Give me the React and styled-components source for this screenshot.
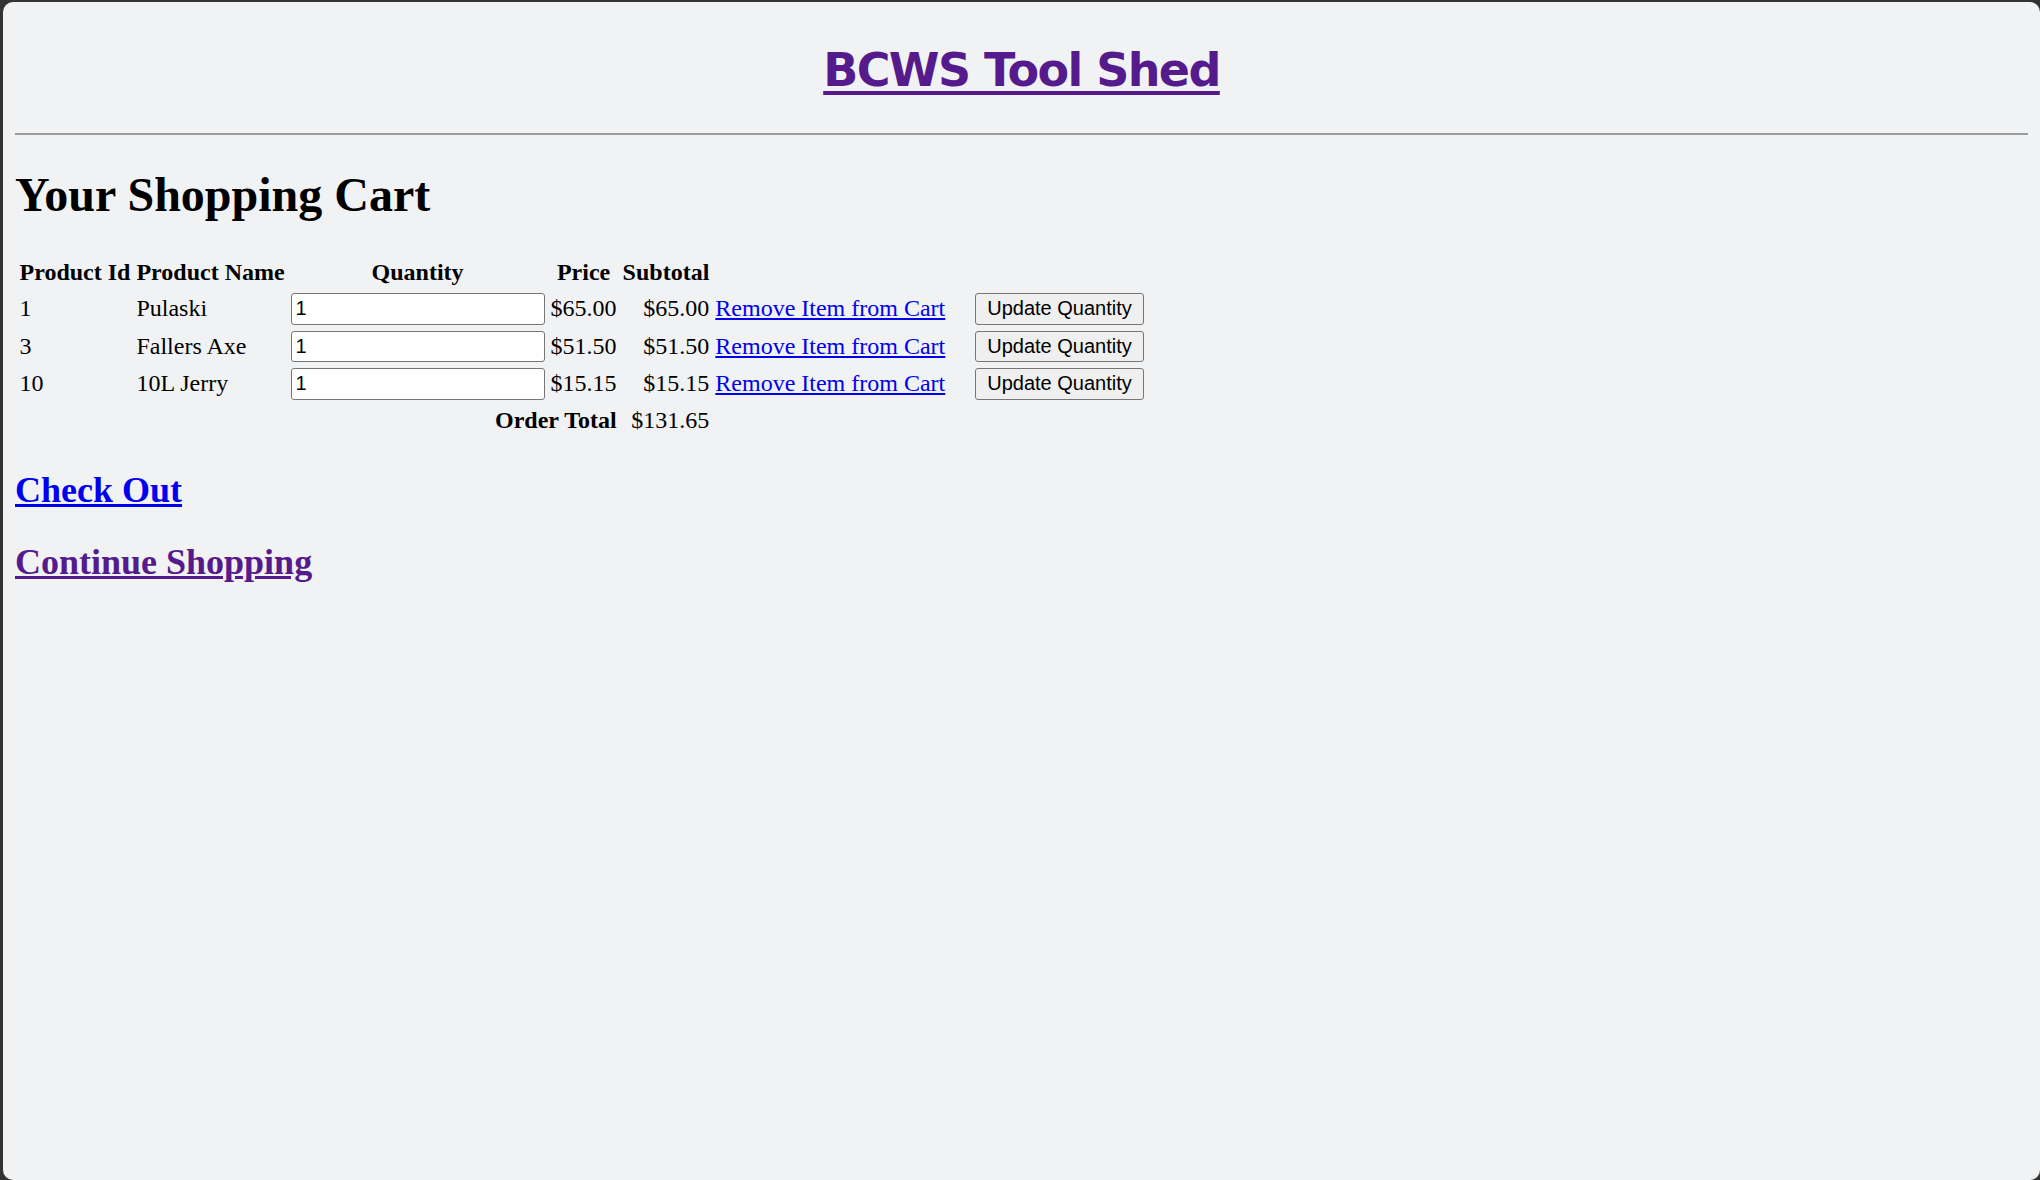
import styled, { createGlobalStyle } from "styled-components";

//===========STYLES============
const GlobalStyle = createGlobalStyle`
  html, body {
    margin: 0;
    background: #333333;
  }
  body {
    font-family: "Liberation Serif", "Times New Roman", serif;
    color: #000;
  }
`;

const Window = styled.div`
  display: flow-root;
  margin: 2px 0 0 3px;
  height: 1178px;
  padding: 0 12px;
  background: #f1f2f4;
  border-radius: 10px;
  box-sizing: border-box;
  overflow: hidden;
`;

const SiteTitle = styled.h1`
  margin: 35px 0 29px;
  text-align: center;
  font-family: "Comic Sans MS", "DejaVu Sans", sans-serif;
  font-size: 46px;
  font-weight: bold;
  letter-spacing: -1.6px;
  line-height: 67px;
`;

const TitleLink = styled.a`
  color: #551a8b;
  text-decoration: underline;
  text-decoration-thickness: 4px;
  text-underline-offset: 5px;
`;

const Rule = styled.hr`
  margin: 12px 0;
  border: none;
  border-top: 2px solid #9c9c9c;
`;

const Heading = styled.h1`
  margin: 32px 0;
  font-size: 48px;
  font-weight: bold;
`;

const CartTable = styled.table`
  border-spacing: 3px;
  font-size: 24px;
`;

const HeaderRow = styled.tr`
  & > th {
    padding-bottom: 3px;
  }
`;

const TotalRow = styled.tr`
  & > th,
  & > td {
    padding-top: 3px;
  }
`;

const HeadCell = styled.th`
  padding: 1.5px;
  text-align: ${(p) => p.$align || "center"};
`;

const Cell = styled.td`
  padding: 1.5px;
  text-align: ${(p) => p.$align || "left"};
  white-space: nowrap;
`;

const QtyInput = styled.input`
  box-sizing: border-box;
  width: 254px;
  height: 31.5px;
  margin: 0;
  padding: 1.5px 4px;
  font-family: "Liberation Sans", Arial, sans-serif;
  font-size: 20px;
  color: #000;
  background: #fff;
  border: 1.5px solid #767676;
  border-radius: 3px;
`;

const TextLink = styled.a`
  color: ${(p) => (p.$visited ? "#551a8b" : "#0000ee")};
  text-decoration: underline;
  cursor: pointer;
`;

const UpdateButton = styled.button`
  box-sizing: border-box;
  height: 31.5px;
  margin: 0 0 0 24px;
  padding: 1.5px 11px;
  font-family: "Liberation Sans", Arial, sans-serif;
  font-size: 20px;
  color: #000;
  background: #efefef;
  border: 1.5px solid #767676;
  border-radius: 3px;
`;

const NavHeading = styled.h2`
  margin: 30px 0;
  font-size: 36px;
  font-weight: bold;
`;

//===========STYLES============

const items = [
  { id: 1, name: "Pulaski", qty: 1, price: 65.0 },
  { id: 3, name: "Fallers Axe", qty: 1, price: 51.5 },
  { id: 10, name: "10L Jerry", qty: 1, price: 15.15 },
];

const money = (n) => "$" + n.toFixed(2);

const App = () => {
  const total = items.reduce((sum, item) => sum + item.price * item.qty, 0);

  return (
    <>
      <GlobalStyle />
      <Window>
        <SiteTitle>
          <TitleLink href="#">BCWS Tool Shed</TitleLink>
        </SiteTitle>
        <Rule />
        <Heading>Your Shopping Cart</Heading>
        <CartTable>
          <tbody>
            <HeaderRow>
              <HeadCell>Product Id</HeadCell>
              <HeadCell>Product Name</HeadCell>
              <HeadCell>Quantity</HeadCell>
              <HeadCell>Price</HeadCell>
              <HeadCell>Subtotal</HeadCell>
            </HeaderRow>
            {items.map((item) => (
              <tr key={item.id}>
                <Cell>{item.id}</Cell>
                <Cell>{item.name}</Cell>
                <Cell>
                  <QtyInput type="text" defaultValue={item.qty} />
                </Cell>
                <Cell>{money(item.price)}</Cell>
                <Cell $align="right">{money(item.price * item.qty)}</Cell>
                <Cell>
                  <TextLink href="#">Remove Item from Cart</TextLink>
                </Cell>
                <Cell>
                  <UpdateButton type="button">Update Quantity</UpdateButton>
                </Cell>
              </tr>
            ))}
            <TotalRow>
              <HeadCell colSpan={4} $align="right">
                Order Total
              </HeadCell>
              <Cell $align="right">{money(total)}</Cell>
            </TotalRow>
          </tbody>
        </CartTable>
        <NavHeading>
          <TextLink href="#">Check Out</TextLink>
        </NavHeading>
        <NavHeading>
          <TextLink href="#" $visited>
            Continue Shopping
          </TextLink>
        </NavHeading>
      </Window>
    </>
  );
};

export default App;
